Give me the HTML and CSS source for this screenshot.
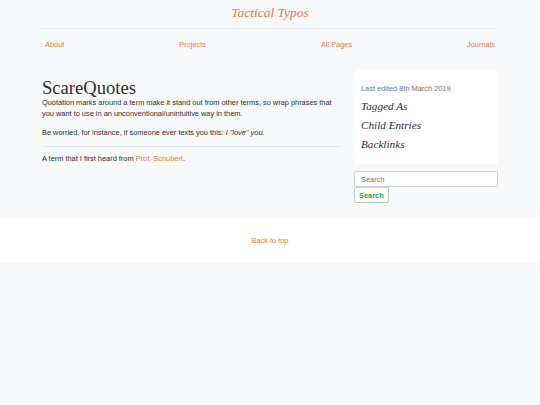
FILE: index.html
```html
<!DOCTYPE html>
<html>
<head>
<meta charset="utf-8">
<link rel="stylesheet" href="styles.css">
</head>
<body>
<div class="container">
  <header class="masthead">
    <a class="brand" href="#">Tactical Typos</a>
  </header>
  <nav class="nav">
    <a href="#">About</a>
    <a href="#">Projects</a>
    <a href="#">All Pages</a>
    <a href="#">Journals</a>
  </nav>
  <main class="layout">
    <article class="content">
      <h1 class="title">ScareQuotes</h1>
      <p>Quotation marks around a term make it stand out from other terms, so wrap phrases that you want to use in an unconventional/unintuitive way in them.</p>
      <p>Be worried, for instance, if someone ever texts you this: <em>I "love" you.</em></p>
      <hr class="rule">
      <p>A term that I first heard from <a href="#">Prof. Schubert</a>.</p>
    </article>
    <aside class="sidebar">
      <div class="card">
        <div class="edited">Last edited 8th March 2019</div>
        <h3 class="side-head">Tagged As</h3>
        <h3 class="side-head">Child Entries</h3>
        <h3 class="side-head">Backlinks</h3>
      </div>
      <form class="search">
        <input class="search-input" type="text" placeholder="Search">
        <button class="search-btn" type="button">Search</button>
      </form>
    </aside>
  </main>
</div>
<footer class="footer">
  <a href="#">Back to top</a>
</footer>
</body>
</html>
```
FILE: styles.css
```css
html, body {
  margin: 0;
  padding: 0;
  background: #f8f9fa;
}
body {
  font-family: "Liberation Sans", Arial, sans-serif;
  font-size: 7.4px;
  line-height: 11px;
  color: #2b2f33;
}
a {
  color: #e8793a;
  text-decoration: none;
}
.container {
  width: 456px;
  margin: 0 auto;
}
.masthead {
  text-align: center;
  padding: 3px 0 6px;
  border-bottom: 1px solid #e9ecef;
}
.brand {
  font-family: "Liberation Serif", serif;
  font-style: italic;
  font-size: 13.5px;
  line-height: 19px;
}
.nav {
  display: flex;
  justify-content: space-between;
  padding: 10px 3px 0;
  line-height: 12px;
}
.layout {
  display: flex;
  gap: 12px;
  margin-top: 18px;
  padding-bottom: 15px;
}
.content {
  flex: 0 0 300px;
  padding-top: 9px;
}
.title {
  font-family: "Liberation Serif", serif;
  font-weight: normal;
  font-size: 18.6px;
  line-height: 20px;
  margin: 0 0 -1px;
}
.content p {
  margin: 0 0 8px;
}
.rule {
  border: 0;
  border-top: 1px solid #e5e7ea;
  margin: 2px 0 6px;
}
.sidebar {
  flex: 1;
}
.card {
  background: #fff;
  border-radius: 3px;
  padding: 14px 7px 8px;
}
.edited {
  color: #6c757d;
  margin-bottom: 5px;
}
.side-head {
  font-family: "Liberation Serif", serif;
  font-style: italic;
  font-weight: normal;
  font-size: 11.2px;
  line-height: 15px;
  margin: 0 0 4px;
}
.search {
  margin-top: 7px;
}
.search-input {
  display: block;
  box-sizing: border-box;
  width: 100%;
  height: 16px;
  padding: 0 6px;
  border: 1px solid #ced4da;
  border-radius: 2px;
  font-family: "Liberation Sans", Arial, sans-serif;
  font-size: 7.4px;
  background: #fff;
}
.search-input::placeholder {
  color: #6c757d;
}
.search-btn {
  display: block;
  box-sizing: border-box;
  height: 16px;
  padding: 0 4px;
  margin-top: 0;
  border: 1px solid #a8dcb6;
  border-radius: 2px;
  background: #fff;
  color: #28a745;
  font-family: "Liberation Sans", Arial, sans-serif;
  font-weight: bold;
  font-size: 7.4px;
}
.footer {
  background: #fff;
  text-align: center;
  padding: 17px 0 17px;
  line-height: 11px;
}
```
